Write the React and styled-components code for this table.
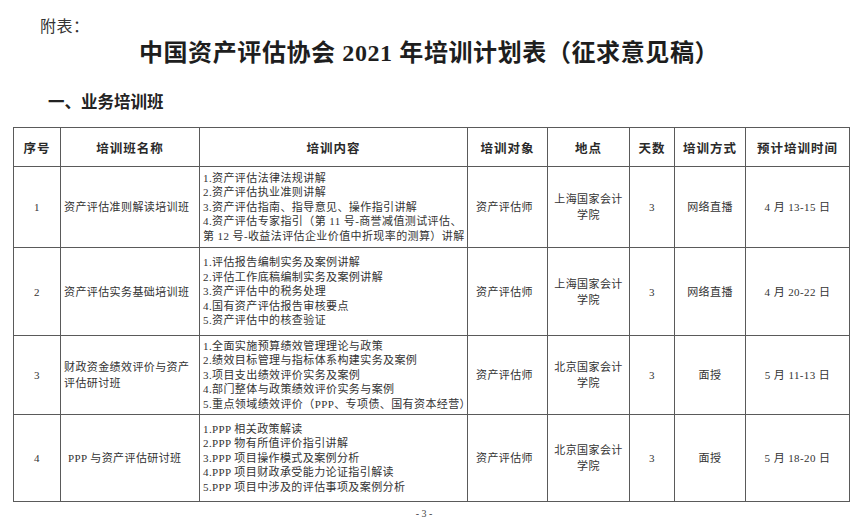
import React from "react";
import styled, { createGlobalStyle } from "styled-components";

const Global = createGlobalStyle`
  html, body { margin: 0; padding: 0; background: #fff; overflow: hidden; }
  body { font-family: "Liberation Serif", "Noto Sans CJK SC", serif; color: #2b2b2b; }
`;

const Page = styled.div`
  width: 864px;
  height: 520px;
  padding-top: 15px;
  box-sizing: border-box;
`;

const Annex = styled.div`
  margin-left: 40px;
  font-family: "Noto Sans CJK SC", sans-serif;
  font-size: 16px;
  line-height: 20px;
  letter-spacing: 0.5px;
  color: #333;
`;

const Title = styled.h1`
  margin: 3px 0 0 0;
  padding-right: 6px;
  text-align: center;
  font-family: "Liberation Serif", "Noto Sans CJK SC", serif;
  font-weight: 700;
  font-size: 24px;
  line-height: 30px;
  letter-spacing: 0.6px;
  color: #1e1e1e;
`;

const Section = styled.h2`
  margin: 23px 0 0 48px;
  font-family: "Noto Sans CJK SC", sans-serif;
  font-weight: 700;
  font-size: 16.5px;
  line-height: 20px;
  color: #222;
`;

const Table = styled.table`
  margin: 16px 0 0 13px;
  width: 836px;
  border-collapse: collapse;
  table-layout: fixed;
  border: 1.5px solid #4a4a4a;
`;

const Th = styled.th`
  height: 38px;
  padding: 0;
  border: 1px solid #5a5a5a;
  font-family: "Noto Sans CJK SC", sans-serif;
  font-weight: 600;
  font-size: 12.5px;
  letter-spacing: 1px;
  color: #2a2a2a;
  text-align: center;
  vertical-align: middle;
`;

const Td = styled.td`
  padding: 0 ${(p) => p.$pad ?? 0}px;
  border: 1px solid #5a5a5a;
  font-size: 11px;
  letter-spacing: 0.4px;
  color: #333;
  text-align: ${(p) => p.$align || "center"};
  vertical-align: middle;
  line-height: 16px;
`;

const Row = styled.tr`
  height: ${(p) => p.$h}px;
`;

const Lines = styled.div`
  line-height: 14.5px;
  white-space: nowrap;
`;

const Line = styled.div``;

const PageNo = styled.div`
  width: 836px;
  margin: 6px 0 0 13px;
  padding-right: 14px;
  box-sizing: border-box;
  text-align: center;
  font-size: 10px;
  line-height: 12px;
  color: #444;
`;

const cols = [47, 139, 268, 80, 82, 45, 71, 104];

const rows = [
  {
    h: 81,
    no: "1",
    name: ["资产评估准则解读培训班"],
    namePad: 3,
    content: [
      "1.资产评估法律法规讲解",
      "2.资产评估执业准则讲解",
      "3.资产评估指南、指导意见、操作指引讲解",
      "4.资产评估专家指引（第 11 号-商誉减值测试评估、",
      "第 12 号-收益法评估企业价值中折现率的测算）讲解",
    ],
    target: "资产评估师",
    place: ["上海国家会计", "学院"],
    days: "3",
    mode: "网络直播",
    time: "4 月 13-15 日",
  },
  {
    h: 88,
    no: "2",
    name: ["资产评估实务基础培训班"],
    namePad: 3,
    content: [
      "1.评估报告编制实务及案例讲解",
      "2.评估工作底稿编制实务及案例讲解",
      "3.资产评估中的税务处理",
      "4.国有资产评估报告审核要点",
      "5.资产评估中的核查验证",
    ],
    target: "资产评估师",
    place: ["上海国家会计", "学院"],
    days: "3",
    mode: "网络直播",
    time: "4 月 20-22 日",
  },
  {
    h: 79,
    no: "3",
    name: ["财政资金绩效评价与资产", "评估研讨班"],
    namePad: 3,
    content: [
      "1.全面实施预算绩效管理理论与政策",
      "2.绩效目标管理与指标体系构建实务及案例",
      "3.项目支出绩效评价实务及案例",
      "4.部门整体与政策绩效评价实务与案例",
      "5.重点领域绩效评价（PPP、专项债、国有资本经营）",
    ],
    target: "资产评估师",
    place: ["北京国家会计", "学院"],
    days: "3",
    mode: "面授",
    time: "5 月 11-13 日",
  },
  {
    h: 87,
    no: "4",
    name: ["PPP 与资产评估研讨班"],
    namePad: 7,
    content: [
      "1.PPP 相关政策解读",
      "2.PPP 物有所值评价指引讲解",
      "3.PPP 项目操作模式及案例分析",
      "4.PPP 项目财政承受能力论证指引解读",
      "5.PPP 项目中涉及的评估事项及案例分析",
    ],
    target: "资产评估师",
    place: ["北京国家会计", "学院"],
    days: "3",
    mode: "面授",
    time: "5 月 18-20 日",
  },
];

const heads = ["序号", "培训班名称", "培训内容", "培训对象", "地点", "天数", "培训方式", "预计培训时间"];

export default function App() {
  return (
    <Page>
      <Global />
      <Annex>附表：</Annex>
      <Title>中国资产评估协会 2021 年培训计划表（征求意见稿）</Title>
      <Section>一、业务培训班</Section>
      <Table>
        <colgroup>
          {cols.map((w, i) => (
            <col key={i} style={{ width: w }} />
          ))}
        </colgroup>
        <thead>
          <tr>
            {heads.map((h) => (
              <Th key={h}>{h}</Th>
            ))}
          </tr>
        </thead>
        <tbody>
          {rows.map((r) => (
            <Row key={r.no} $h={r.h}>
              <Td>{r.no}</Td>
              <Td $align="left" $pad={r.namePad}>
                {r.name.map((n) => (
                  <Line key={n}>{n}</Line>
                ))}
              </Td>
              <Td $align="left" $pad={3}>
                <Lines>
                  {r.content.map((c) => (
                    <Line key={c}>{c}</Line>
                  ))}
                </Lines>
              </Td>
              <Td $align="left" $pad={8}>{r.target}</Td>
              <Td>
                {r.place.map((p) => (
                  <Line key={p}>{p}</Line>
                ))}
              </Td>
              <Td>{r.days}</Td>
              <Td>{r.mode}</Td>
              <Td>{r.time}</Td>
            </Row>
          ))}
        </tbody>
      </Table>
      <PageNo>- 3 -</PageNo>
    </Page>
  );
}
